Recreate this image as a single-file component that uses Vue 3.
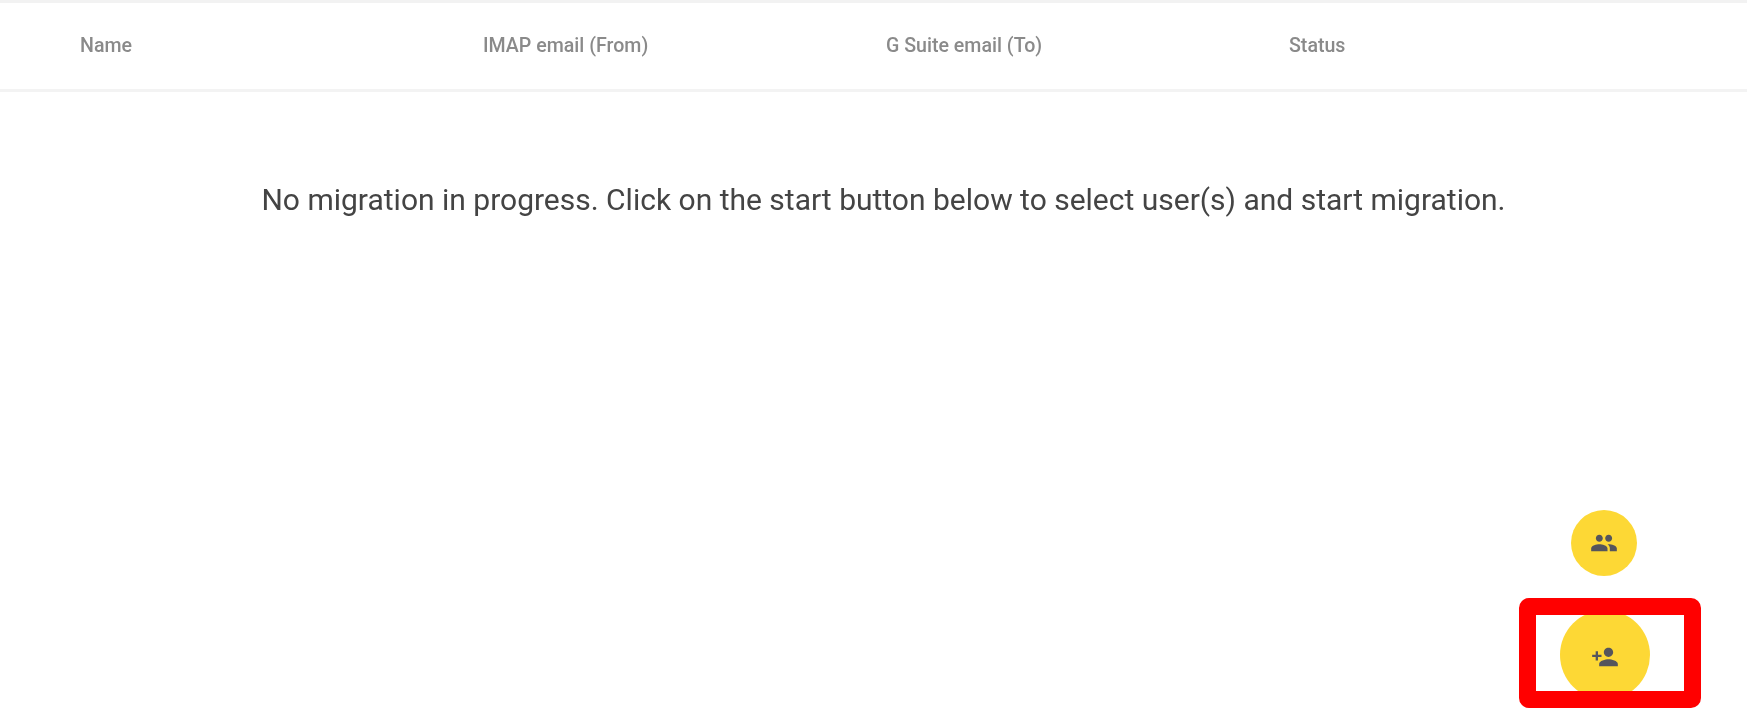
<template>
  <div class="migration-page">
    <div class="table-head">
      <div v-for="col in columns" :key="col" class="head-cell">{{ col }}</div>
    </div>
    <p class="empty-msg">No migration in progress. Click on the start button below to select user(s) and start migration.</p>

    <button class="fab fab-small" aria-label="Bulk add users">
      <svg viewBox="0 0 24 24" class="fab-icon"><path d="M16 11c1.66 0 2.99-1.34 2.99-3S17.66 5 16 5c-1.66 0-3 1.34-3 3s1.34 3 3 3zm-8 0c1.66 0 2.99-1.34 2.99-3S9.66 5 8 5C6.34 5 5 6.34 5 8s1.34 3 3 3zm0 2c-2.33 0-7 1.17-7 3.5V19h14v-2.5c0-2.33-4.67-3.5-7-3.5zm8 0c-.29 0-.62.02-.97.05 1.16.84 1.97 1.97 1.97 3.45V19h6v-2.5c0-2.33-4.67-3.5-7-3.5z" /></svg>
    </button>
    <button class="fab fab-large" aria-label="Add user">
      <svg viewBox="0 0 24 24" class="fab-icon"><path d="M15 12c2.21 0 4-1.79 4-4s-1.79-4-4-4-4 1.79-4 4 1.79 4 4 4zm-9-2V7H4v3H1v2h3v3h2v-3h3v-2H6zm9 4c-2.67 0-8 1.34-8 4v2h16v-2c0-2.66-5.33-4-8-4z" /></svg>
    </button>
    <div class="highlight-box"></div>
  </div>
</template>

<script setup>
const columns = ['Name', 'IMAP email (From)', 'G Suite email (To)', 'Status']
</script>

<style scoped>
.migration-page {
  position: relative;
  width: 1747px;
  height: 711px;
  overflow: hidden;
  background: #fff;
  font-family: Roboto, sans-serif;
  border-top: 3px solid #f2f2f2;
  box-sizing: border-box;
}

.table-head {
  display: grid;
  grid-template-columns: repeat(4, 403px);
  align-items: center;
  height: 84px;
  padding-left: 80px;
  padding-bottom: 2px;
  border-bottom: 3px solid #f3f3f3;
}

.head-cell {
  font-size: 19.6px;
  font-weight: 500;
  color: #8a8a8a;
  filter: blur(0.35px);
}

.empty-msg {
  margin: 0;
  padding: 90px 0 0 20px;
  text-align: center;
  font-size: 30px;
  line-height: 36px;
  color: #444;
  filter: blur(0.35px);
}

.fab {
  position: absolute;
  display: flex;
  align-items: center;
  justify-content: center;
  padding: 0;
  border: none;
  border-radius: 50%;
  background: #fdd835;
}

.fab-small {
  left: 1571px;
  top: 507px;
  width: 66px;
  height: 66px;
}

.fab-large {
  left: 1560px;
  top: 607px;
  width: 90px;
  height: 90px;
}

.fab-large .fab-icon {
  margin-top: 3px;
}

.fab-icon {
  width: 28px;
  height: 28px;
  fill: #55555c;
  filter: blur(0.4px);
}

.highlight-box {
  position: absolute;
  left: 1519px;
  top: 595px;
  width: 182px;
  height: 110px;
  box-sizing: border-box;
  border: 17px solid #f00;
  border-radius: 10px;
}
</style>

<style>
body {
  margin: 0;
}
</style>
